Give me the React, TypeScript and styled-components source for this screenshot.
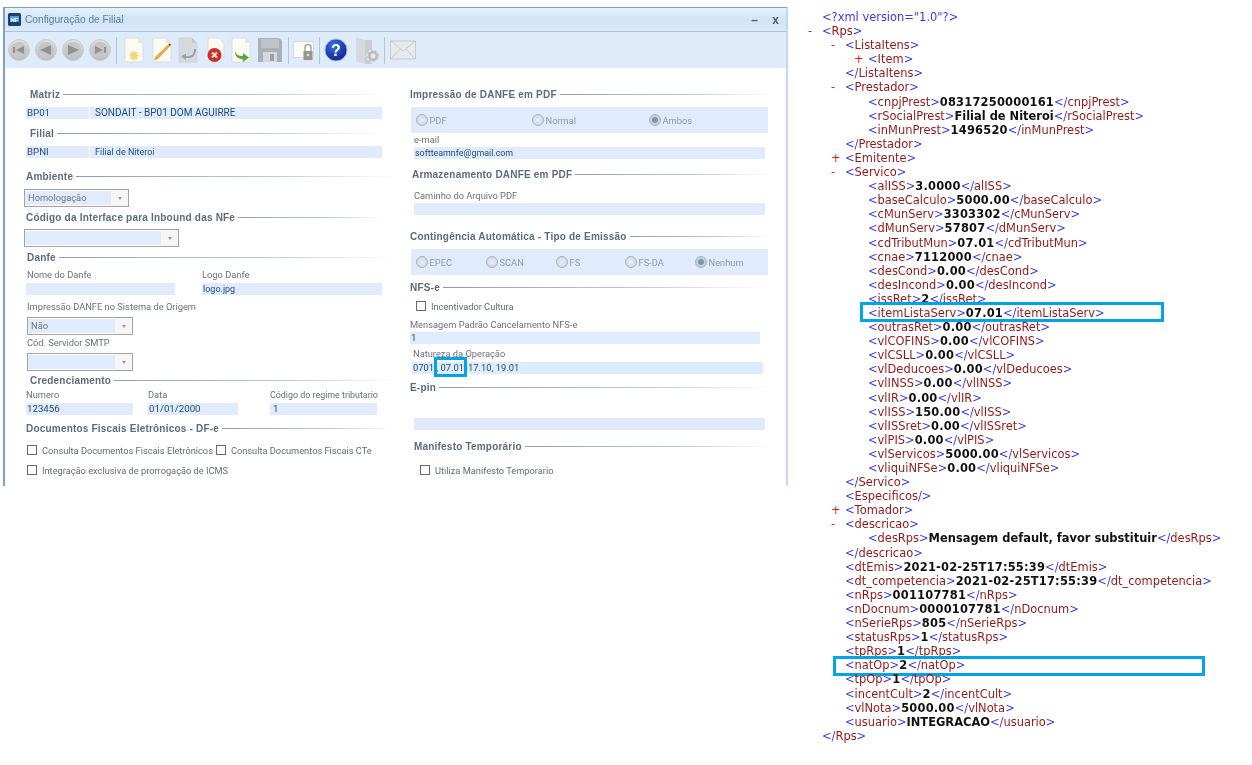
import React from 'react';
import styled, { createGlobalStyle } from 'styled-components';

const GlobalStyle = createGlobalStyle`
  html, body { margin: 0; padding: 0; background: #fff; }
  body { font-family: Roboto, "Liberation Sans", Arial, sans-serif; }
`;

const Page = styled.div`
  width: 1252px;
  height: 765px;
  display: flex;
  align-items: flex-start;
  overflow: hidden;
  background: #fff;
`;

const Window = styled.div`
  width: 785px;
  height: 479px;
  margin: 7px 0 0 3px;
  border-top: 1px solid #7f9fc0;
  border-left: 2px solid #7f9fc6;
  border-right: 2px solid #c5d8ef;
  box-sizing: border-box;
  overflow: hidden;
  display: flex;
  flex-direction: column;
  filter: blur(0.4px);
`;

const TitleBar = styled.div`
  height: 23px;
  flex: none;
  display: flex;
  align-items: center;
  padding-left: 3px;
  background: linear-gradient(#e6f0fb, #d2e3f6 50%, #dbe8f8);
  border-bottom: 1px solid #a9c3dd;
`;

const TitleText = styled.span`
  flex: 1;
  margin-left: 4px;
  font-family: "Liberation Sans", Arial, sans-serif;
  font-size: 10.2px;
  color: #5d7fa3;
`;

const WinBtn = styled.span`
  width: 21px;
  text-align: center;
  font-family: "Liberation Sans", Arial, sans-serif;
  font-size: 12px;
  font-weight: bold;
  color: #44617f;
`;

const Toolbar = styled.div`
  height: 36px;
  flex: none;
  display: flex;
  align-items: center;
  padding-left: 3px;
  background: #deebfb;
`;

const ToolSlot = styled.span<{ $w: number; $ml?: number }>`
  width: ${p => p.$w}px;
  height: 26px;
  margin-left: ${p => p.$ml ?? 0}px;
  display: flex;
  align-items: center;
  justify-content: center;
  flex: none;
`;

const Separator = styled.span<{ $ml: number }>`
  width: 1px;
  height: 27px;
  margin-left: ${p => p.$ml}px;
  background: #b7c3d0;
  flex: none;
`;

const Form = styled.div`
  flex: 1;
  display: flex;
  background: #fff;
`;

const Column = styled.div<{ $w: number; $pl: number }>`
  width: ${p => p.$w}px;
  padding-left: ${p => p.$pl}px;
  box-sizing: border-box;
  flex: none;
  display: flex;
  flex-direction: column;
  align-items: flex-start;
`;

const SectionTitle = styled.div<{ $mt: number; $ml?: number; $w: number }>`
  height: 14px;
  width: ${p => p.$w}px;
  margin-top: ${p => p.$mt}px;
  margin-left: ${p => p.$ml ?? 0}px;
  display: flex;
  align-items: center;
  gap: 3px;
  font-family: "Liberation Sans", Arial, sans-serif;
  font-size: 10px;
  font-weight: bold;
  letter-spacing: 0.2px;
  color: #5b6c7e;
  white-space: nowrap;
  &::after {
    content: '';
    flex: 1;
    height: 1px;
    background: linear-gradient(90deg, #8f9dad, #c4ccd6 65%, #fff);
  }
`;

const Label = styled.div<{ $mt: number; $ml?: number; $fs?: number }>`
  height: 12px;
  line-height: 12px;
  margin-top: ${p => p.$mt}px;
  margin-left: ${p => p.$ml ?? 0}px;
  font-size: ${p => p.$fs ?? 9.3}px;
  color: #6b7278;
  white-space: nowrap;
`;

const Input = styled.div<{ $mt: number; $ml?: number; $w: number; $pad?: number; $fs?: number }>`
  position: relative;
  height: 12px;
  line-height: 12px;
  width: ${p => p.$w}px;
  margin-top: ${p => p.$mt}px;
  margin-left: ${p => p.$ml ?? 0}px;
  padding-left: ${p => p.$pad ?? 1}px;
  box-sizing: border-box;
  background: #e0ecfd;
  font-size: ${p => p.$fs ?? 9.7}px;
  color: #1f4a7c;
  white-space: nowrap;
`;

const Row = styled.div<{ $mt: number; $gap?: number }>`
  display: flex;
  gap: ${p => p.$gap ?? 0}px;
  margin-top: ${p => p.$mt}px;
`;

const Field = styled.div<{ $ml?: number }>`
  display: flex;
  flex-direction: column;
  margin-left: ${p => p.$ml ?? 0}px;
`;

const Select = styled.div<{ $mt: number; $ml?: number; $w: number }>`
  width: ${p => p.$w}px;
  height: 18px;
  margin-top: ${p => p.$mt}px;
  margin-left: ${p => p.$ml ?? 0}px;
  border: 1px solid #a3a3a3;
  box-sizing: border-box;
  display: flex;
  font-size: 9.3px;
  color: #6f7479;
`;

const SelectValue = styled.span`
  flex: 1;
  margin: 1px 0;
  padding-left: 3px;
  line-height: 14px;
  background: #e0ecfd;
`;

const SelectArrow = styled.span`
  width: 17px;
  display: flex;
  align-items: center;
  justify-content: center;
  background: #f6f6f6;
  &::after {
    content: '';
    border-left: 2.5px solid transparent;
    border-right: 2.5px solid transparent;
    border-top: 3px solid #9a9a9a;
  }
`;

const RadioPanel = styled.div<{ $mt: number; $ml?: number }>`
  width: 357px;
  height: 26px;
  margin-top: ${p => p.$mt}px;
  margin-left: ${p => p.$ml ?? 0}px;
  display: flex;
  align-items: center;
  background: #e0ecfd;
  padding-left: 4.5px;
  box-sizing: border-box;
`;

const RadioItem = styled.label<{ $w: number }>`
  width: ${p => p.$w}px;
  display: flex;
  align-items: center;
  gap: 2px;
  font-size: 9.3px;
  color: #8c99a8;
`;

const RadioDot = styled.span<{ $on?: boolean }>`
  width: 10px;
  height: 10px;
  border-radius: 50%;
  border: 1px solid #a9b3bb;
  background: ${p => p.$on
    ? 'radial-gradient(circle, #7c96b4 0 2.5px, #c3d0dd 3.5px)'
    : 'radial-gradient(circle, #e6edf4, #c9d3dc)'};
  flex: none;
`;

const CheckRow = styled.div<{ $mt: number; $ml?: number }>`
  height: 14px;
  margin-top: ${p => p.$mt}px;
  margin-left: ${p => p.$ml ?? 0}px;
  display: flex;
  align-items: center;
  font-size: 9.25px;
  color: #666c72;
  white-space: nowrap;
`;

const CheckBox = styled.span<{ $ml?: number }>`
  width: 10px;
  height: 10px;
  margin-left: ${p => p.$ml ?? 0}px;
  margin-right: 5px;
  border: 1px solid #6a6a6a;
  box-sizing: border-box;
  background: #fff;
  flex: none;
`;

const Highlight = styled.span`
  position: absolute;
  border: 3px solid #00a2e8;
  box-sizing: border-box;
  pointer-events: none;
`;

const OpHighlight = styled(Highlight)`
  left: 22px;
  top: -5px;
  width: 33px;
  height: 20px;
`;

const XmlPane = styled.div`
  margin-left: 12px;
  padding-top: 10px;
  font-family: "DejaVu Sans", Verdana, sans-serif;
  font-size: 11.45px;
  filter: blur(0.3px);
`;

const XmlLine = styled.div<{ $level: number }>`
  position: relative;
  height: 14.1px;
  line-height: 14.1px;
  padding-left: ${p => 22 + p.$level * 23}px;
  white-space: nowrap;
`;

const Marker = styled.span`
  display: inline-block;
  width: 14px;
  margin-left: -14px;
  color: #e02020;
`;

const Bracket = styled.span`
  color: #3c3cd8;
`;

const TagName = styled.span`
  color: #8c1a1a;
`;

const Value = styled.span<{ $numeric: boolean }>`
  font-weight: bold;
  color: #111;
  letter-spacing: ${p => (p.$numeric ? 0.2 : 0)}px;
`;

const LineHighlight = styled(Highlight)<{ $left: number; $w: number; $top: number }>`
  left: ${p => p.$left}px;
  top: ${p => p.$top}px;
  width: ${p => p.$w}px;
  height: 20px;
`;

type XmlRow = {
  level: number;
  marker?: string;
  open?: string;
  value?: string;
  close?: string;
  selfClose?: string;
  mark?: [number, number, number];
};

const leaf = (level: number, name: string, value: string, mark?: [number, number, number]): XmlRow => ({
  level,
  open: name,
  value,
  close: name,
  mark,
});

const xmlRows: XmlRow[] = [
  { level: 0, marker: '-', open: 'Rps' },
  { level: 1, marker: '-', open: 'ListaItens' },
  { level: 2, marker: '+', open: 'Item' },
  { level: 1, close: 'ListaItens' },
  { level: 1, marker: '-', open: 'Prestador' },
  leaf(2, 'cnpjPrest', '08317250000161'),
  leaf(2, 'rSocialPrest', 'Filial de Niteroi'),
  leaf(2, 'inMunPrest', '1496520'),
  { level: 1, close: 'Prestador' },
  { level: 1, marker: '+', open: 'Emitente' },
  { level: 1, marker: '-', open: 'Servico' },
  leaf(2, 'alISS', '3.0000'),
  leaf(2, 'baseCalculo', '5000.00'),
  leaf(2, 'cMunServ', '3303302'),
  leaf(2, 'dMunServ', '57807'),
  leaf(2, 'cdTributMun', '07.01'),
  leaf(2, 'cnae', '7112000'),
  leaf(2, 'desCond', '0.00'),
  leaf(2, 'desIncond', '0.00'),
  leaf(2, 'issRet', '2'),
  leaf(2, 'itemListaServ', '07.01', [60, 304, -4]),
  leaf(2, 'outrasRet', '0.00'),
  leaf(2, 'vlCOFINS', '0.00'),
  leaf(2, 'vlCSLL', '0.00'),
  leaf(2, 'vlDeducoes', '0.00'),
  leaf(2, 'vlINSS', '0.00'),
  leaf(2, 'vlIR', '0.00'),
  leaf(2, 'vlISS', '150.00'),
  leaf(2, 'vlISSret', '0.00'),
  leaf(2, 'vlPIS', '0.00'),
  leaf(2, 'vlServicos', '5000.00'),
  leaf(2, 'vliquiNFSe', '0.00'),
  { level: 1, close: 'Servico' },
  { level: 1, selfClose: 'Especificos' },
  { level: 1, marker: '+', open: 'Tomador' },
  { level: 1, marker: '-', open: 'descricao' },
  leaf(2, 'desRps', 'Mensagem default, favor substituir'),
  { level: 1, close: 'descricao' },
  leaf(1, 'dtEmis', '2021-02-25T17:55:39'),
  leaf(1, 'dt_competencia', '2021-02-25T17:55:39'),
  leaf(1, 'nRps', '001107781'),
  leaf(1, 'nDocnum', '0000107781'),
  leaf(1, 'nSerieRps', '805'),
  leaf(1, 'statusRps', '1'),
  leaf(1, 'tpRps', '1'),
  leaf(1, 'natOp', '2', [33, 372, -2]),
  leaf(1, 'tpOp', '1'),
  leaf(1, 'incentCult', '2'),
  leaf(1, 'vlNota', '5000.00'),
  leaf(1, 'usuario', 'INTEGRACAO'),
  { level: 0, close: 'Rps' },
];

const NavButton: React.FC<{ kind: 'first' | 'prev' | 'next' | 'last' }> = ({ kind }) => {
  const id = `nav-${kind}`;
  return (
    <svg width="22" height="22" viewBox="0 0 22 22">
      <defs>
        <linearGradient id={id} x1="0" y1="0" x2="0" y2="1">
          <stop offset="0" stopColor="#e0e0e0" />
          <stop offset="1" stopColor="#bcbcbc" />
        </linearGradient>
      </defs>
      <circle cx="11" cy="11" r="10.5" fill={`url(#${id})`} stroke="#c8ccd0" />
      <circle cx="11" cy="11" r="8" fill="#c6c6c6" />
      {kind === 'first' && <path d="M5 8h2v6H5zM16 7v8l-8-4z" fill="#8f9396" />}
      {kind === 'prev' && <path d="M16 6v10L5 11z" fill="#8f9396" />}
      {kind === 'next' && <path d="M6 6v10l11-5z" fill="#8f9396" />}
      {kind === 'last' && <path d="M15 8h2v6h-2zM6 7v8l8-4z" fill="#8f9396" />}
    </svg>
  );
};

const DocBase: React.FC<{ children?: React.ReactNode; muted?: boolean }> = ({ children, muted }) => (
  <svg width="22" height="26" viewBox="0 0 22 26">
    <path
      d="M2 1h13l5 5v19H2z"
      fill={muted ? '#d6dade' : '#fbfaf3'}
      stroke={muted ? '#cdd2d6' : '#dcdcd8'}
    />
    <path d="M15 1v5h5z" fill={muted ? '#c3c8cd' : '#e8e8e0'} />
    {children}
  </svg>
);

const NewDocIcon = () => (
  <DocBase>
    <path
      d="M11 13l1 3 3-1.200-1.200 3 3 1-3 1 1.200 3-3-1.200-1 3-1-3-3 1.200 1.200-3-3-1 3-1L7 14.800l3 1.200z"
      fill="#f3d770"
    />
  </DocBase>
);

const EditDocIcon = () => (
  <DocBase>
    <path d="M18.500 6.500l1.500 1.500L6.500 22l-3 1 1-3z" fill="#efab3a" stroke="#c08a2a" strokeWidth="0.4" />
    <path d="M18.500 6.500l1.500 1.500-1 1-1.500-1.500z" fill="#555" />
  </DocBase>
);

const UndoDocIcon = () => (
  <DocBase muted>
    <path d="M17 12c0 5-2 7-6 7H9v-2.500L4 19.500l5 3.500v-2h2c5 0 8-3 8-9z" fill="#9aa1a7" />
  </DocBase>
);

const DeleteDocIcon = () => (
  <svg width="22" height="26" viewBox="0 0 22 26">
    <path d="M4 1h11l5 5v14H4z" fill="#fbfaf3" stroke="#dcdcd8" />
    <circle cx="10.500" cy="18" r="7" fill="#cf2f2b" />
    <path d="M8 15.500l5 5M13 15.500l-5 5" stroke="#f4e4e4" strokeWidth="2" />
  </svg>
);

const ForwardDocIcon = () => (
  <DocBase>
    <path d="M5 14c1 4 4 5 8 5v-3l6 4.500-6 4.500v-3c-5 0-8-2-8-8z" fill="#52ab3b" />
  </DocBase>
);

const SaveIcon = () => (
  <svg width="26" height="26" viewBox="0 0 26 26">
    <path d="M1 1h21l3 3v21H1z" fill="#a9b0b6" />
    <path d="M4 2h18v9H4z" fill="#bcc3c9" />
    <path d="M6 15h14v10H6z" fill="#d5d9dd" />
    <path d="M13 17h4v7h-4z" fill="#99a1a8" />
  </svg>
);

const LockIcon = () => (
  <svg width="22" height="22" viewBox="0 0 22 22">
    <path d="M0.500 2.500h20v16h-20z" fill="#fbfbf8" stroke="#d6d8da" />
    <path d="M12 12V8.500a3 3 0 0 1 6 0V12" fill="none" stroke="#a8a8a8" strokeWidth="1.500" />
    <path d="M10.500 12h9v9h-9z" fill="#98958c" />
    <circle cx="15" cy="16" r="1.300" fill="#e8e8e0" />
  </svg>
);

const HelpIcon = () => (
  <svg width="24" height="24" viewBox="0 0 24 24">
    <defs>
      <radialGradient id="help-fill" cx="0.4" cy="0.3" r="0.8">
        <stop offset="0" stopColor="#3f6fe0" />
        <stop offset="1" stopColor="#08188c" />
      </radialGradient>
    </defs>
    <circle cx="12" cy="12" r="11" fill="url(#help-fill)" stroke="#a9b7d6" />
    <text x="12" y="17.500" textAnchor="middle" fontSize="16" fontWeight="bold" fill="#fff" fontFamily="Liberation Sans">?</text>
  </svg>
);

const FolderGearIcon = () => (
  <svg width="26" height="28" viewBox="0 0 26 28">
    <path d="M1 1l9 3v24l-9-3z" fill="#d6dade" />
    <path d="M10 4h7v24h-7z" fill="#c8cdd2" />
    <circle cx="18" cy="20" r="6" fill="#b6bcc2" stroke="#dfe3e7" strokeWidth="2" strokeDasharray="3 1.500" />
    <circle cx="18" cy="20" r="2.500" fill="#e8ebee" />
  </svg>
);

const MailIcon = () => (
  <svg width="26" height="20" viewBox="0 0 26 20">
    <path d="M0.500 1h25v18H0.500z" fill="#e7eaed" stroke="#c6cbcf" />
    <path d="M1 1l12 10L25 1M1 19l9-10M25 19l-9-10" fill="none" stroke="#c6cbcf" />
  </svg>
);

const AppIcon = () => (
  <svg width="13" height="13" viewBox="0 0 13 13">
    <rect width="13" height="13" rx="1.500" fill="#1c3f75" />
    <rect x="2" y="3" width="9" height="6" fill="#4e9fe0" />
    <text x="6.500" y="8.500" textAnchor="middle" fontSize="6" fontWeight="bold" fill="#fff" fontFamily="Liberation Sans">NF</text>
  </svg>
);

const App: React.FC = () => (
  <Page>
    <GlobalStyle />
    <Window>
      <TitleBar>
        <AppIcon />
        <TitleText>Configuração de Filial</TitleText>
        <WinBtn>–</WinBtn>
        <WinBtn>x</WinBtn>
      </TitleBar>
      <Toolbar>
        <ToolSlot $w={22}><NavButton kind="first" /></ToolSlot>
        <ToolSlot $w={22} $ml={5}><NavButton kind="prev" /></ToolSlot>
        <ToolSlot $w={22} $ml={5}><NavButton kind="next" /></ToolSlot>
        <ToolSlot $w={22} $ml={5}><NavButton kind="last" /></ToolSlot>
        <Separator $ml={5} />
        <ToolSlot $w={22} $ml={6}><NewDocIcon /></ToolSlot>
        <ToolSlot $w={22} $ml={6}><EditDocIcon /></ToolSlot>
        <ToolSlot $w={22} $ml={4}><UndoDocIcon /></ToolSlot>
        <ToolSlot $w={22} $ml={5}><DeleteDocIcon /></ToolSlot>
        <ToolSlot $w={22} $ml={4}><ForwardDocIcon /></ToolSlot>
        <ToolSlot $w={26} $ml={5}><SaveIcon /></ToolSlot>
        <Separator $ml={5} />
        <ToolSlot $w={22} $ml={4}><LockIcon /></ToolSlot>
        <Separator $ml={4} />
        <ToolSlot $w={24} $ml={4}><HelpIcon /></ToolSlot>
        <ToolSlot $w={26} $ml={7}><FolderGearIcon /></ToolSlot>
        <Separator $ml={3} />
        <ToolSlot $w={26} $ml={5}><MailIcon /></ToolSlot>
      </Toolbar>
      <Form>
        <Column $w={395} $pl={21}>
          <SectionTitle $mt={19} $ml={4} $w={353}>Matriz</SectionTitle>
          <Row $mt={6} $gap={1}>
            <Input $mt={0} $w={63}>BP01</Input>
            <Input $mt={0} $w={292} $pad={5} $fs={10}>SONDAIT - BP01 DOM AGUIRRE</Input>
          </Row>
          <SectionTitle $mt={7} $ml={4} $w={353}>Filial</SectionTitle>
          <Row $mt={6} $gap={1}>
            <Input $mt={0} $w={63}>BPNI</Input>
            <Input $mt={0} $w={292} $pad={5} $fs={9}>Filial de Niteroi</Input>
          </Row>
          <SectionTitle $mt={11} $w={370}>Ambiente</SectionTitle>
          <Select $mt={6} $ml={-2} $w={105}><SelectValue>Homologação</SelectValue><SelectArrow /></Select>
          <SectionTitle $mt={3} $w={360}>Código da Interface para Inbound das NFe</SectionTitle>
          <Select $mt={5} $ml={-2} $w={155}><SelectValue /><SelectArrow /></Select>
          <SectionTitle $mt={3} $ml={1} $w={368}>Danfe</SectionTitle>
          <Row $mt={5} $gap={27}>
            <Field>
              <Label $mt={0} $ml={1}>Nome do Danfe</Label>
              <Input $mt={2} $w={149} />
            </Field>
            <Field>
              <Label $mt={0}>Logo Danfe</Label>
              <Input $mt={2} $w={180} $fs={9}>logo.jpg</Input>
            </Field>
          </Row>
          <Label $mt={6} $ml={1}>Impressão DANFE no Sistema de Origem</Label>
          <Select $mt={4} $ml={1} $w={106}><SelectValue>Não</SelectValue><SelectArrow /></Select>
          <Label $mt={2} $ml={1}>Cód. Servidor SMTP</Label>
          <Select $mt={4} $ml={1} $w={106}><SelectValue /><SelectArrow /></Select>
          <SectionTitle $mt={2} $ml={4} $w={365}>Credenciamento</SectionTitle>
          <Row $mt={2} $gap={15}>
            <Field>
              <Label $mt={0}>Numero</Label>
              <Input $mt={2} $w={107}>123456</Input>
            </Field>
            <Field>
              <Label $mt={0}>Data</Label>
              <Input $mt={2} $w={90}>01/01/2000</Input>
            </Field>
            <Field $ml={17}>
              <Label $mt={0} $fs={8.9}>Código do regime tributario</Label>
              <Input $mt={2} $w={107} $pad={3}>1</Input>
            </Field>
          </Row>
          <SectionTitle $mt={6} $w={370}>Documentos Fiscais Eletrônicos - DF-e</SectionTitle>
          <CheckRow $mt={8} $ml={1}>
            <CheckBox />Consulta Documentos Fiscais Eletrônicos
            <CheckBox $ml={3} />Consulta Documentos Fiscais CTe
          </CheckRow>
          <CheckRow $mt={6} $ml={1}>
            <CheckBox />Integração exclusiva de prorrogação de ICMS
          </CheckRow>
        </Column>
        <Column $w={386} $pl={10}>
          <SectionTitle $mt={19} $w={360}>Impressão de DANFE em PDF</SectionTitle>
          <RadioPanel $mt={6} $ml={1}>
            <RadioItem $w={116}><RadioDot />PDF</RadioItem>
            <RadioItem $w={117}><RadioDot />Normal</RadioItem>
            <RadioItem $w={100}><RadioDot $on />Ambos</RadioItem>
          </RadioPanel>
          <Label $mt={1} $ml={4}>e-mail</Label>
          <Input $mt={1} $ml={4} $w={351} $fs={8.9}>softteamnfe@gmail.com</Input>
          <SectionTitle $mt={8} $ml={2} $w={358}>Armazenamento DANFE em PDF</SectionTitle>
          <Label $mt={9} $ml={4}>Caminho do Arquivo PDF</Label>
          <Input $mt={1} $ml={4} $w={351} />
          <SectionTitle $mt={14} $w={360}>Contingência Automática - Tipo de Emissão</SectionTitle>
          <RadioPanel $mt={6} $ml={1}>
            <RadioItem $w={70}><RadioDot />EPEC</RadioItem>
            <RadioItem $w={70}><RadioDot />SCAN</RadioItem>
            <RadioItem $w={69}><RadioDot />FS</RadioItem>
            <RadioItem $w={70}><RadioDot />FS-DA</RadioItem>
            <RadioItem $w={70}><RadioDot $on />Nenhum</RadioItem>
          </RadioPanel>
          <SectionTitle $mt={5} $w={356}>NFS-e</SectionTitle>
          <CheckRow $mt={5} $ml={6}><CheckBox />Incentivador Cultura</CheckRow>
          <Label $mt={6}>Mensagem Padrão Cancelamento NFS-e</Label>
          <Input $mt={1} $w={350}>1</Input>
          <Label $mt={4} $ml={3}>Natureza da Operação</Label>
          <Input $mt={2} $ml={2} $w={351} $fs={9.35}>
            0701 , 07.01, 17.10, 19.01
            <OpHighlight />
          </Input>
          <SectionTitle $mt={6} $w={365}>E-pin</SectionTitle>
          <Input $mt={24} $ml={4} $w={351} />
          <SectionTitle $mt={9} $ml={4} $w={360}>Manifesto Temporário</SectionTitle>
          <CheckRow $mt={10} $ml={10}><CheckBox />Utiliza Manifesto Temporario</CheckRow>
        </Column>
      </Form>
    </Window>
    <XmlPane>
      <XmlLine $level={0}>
        <Bracket>&lt;?xml version="1.0"?&gt;</Bracket>
      </XmlLine>
      {xmlRows.map((row, i) => (
        <XmlLine key={i} $level={row.level}>
          {row.marker && <Marker>{row.marker}</Marker>}
          {row.open && <><Bracket>&lt;</Bracket><TagName>{row.open}</TagName><Bracket>&gt;</Bracket></>}
          {row.value && <Value $numeric={/^[\d.:T-]+$/.test(row.value)}>{row.value}</Value>}
          {row.close && <><Bracket>&lt;/</Bracket><TagName>{row.close}</TagName><Bracket>&gt;</Bracket></>}
          {row.selfClose && <><Bracket>&lt;</Bracket><TagName>{row.selfClose}</TagName><Bracket>/&gt;</Bracket></>}
          {row.mark && <LineHighlight $left={row.mark[0]} $w={row.mark[1]} $top={row.mark[2]} />}
        </XmlLine>
      ))}
    </XmlPane>
  </Page>
);

export default App;
